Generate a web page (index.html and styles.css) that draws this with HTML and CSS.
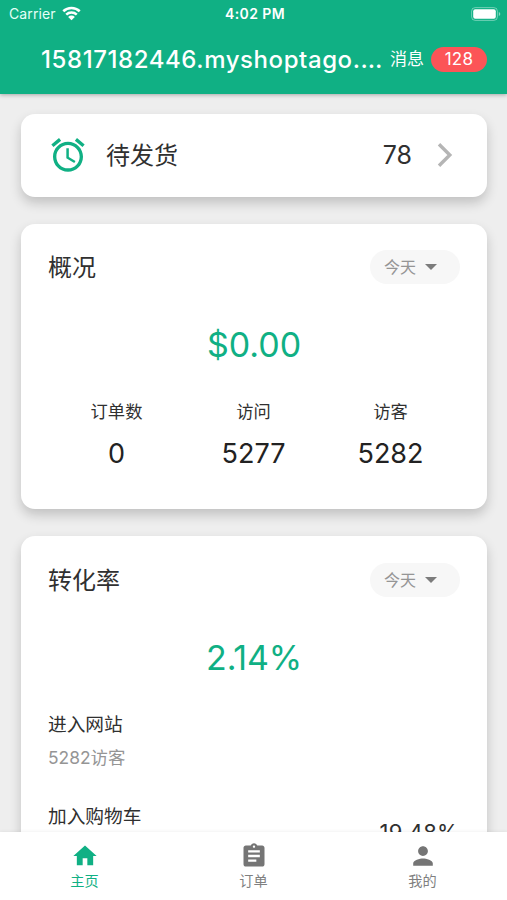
FILE: index.html
```
<!DOCTYPE html>
<html lang="zh-CN">
<head>
<meta charset="UTF-8">
<meta name="viewport" content="width=device-width, initial-scale=1.0">
<title>主页</title>
<link rel="stylesheet" href="styles.css">
</head>
<body>
<div class="app">
    <header class="header">
        <div class="status-bar">
            <div class="carrier">
                <span>Carrier</span>
                <svg class="wifi" viewBox="0 0 18 14" width="19" height="15">
                    <path d="M1.2 4.9a11.2 11.2 0 0 1 15.6 0M4 8a7.2 7.2 0 0 1 10 0" fill="none" stroke="#fff" stroke-width="2.4"/>
                    <path d="M9 13.4L5.8 10.2a4.6 4.6 0 0 1 6.4 0z" fill="#fff"/>
                </svg>
            </div>
            <div class="time">4:02 PM</div>
            <div class="power">
                <svg viewBox="0 0 30 14" width="30" height="14">
                    <rect x=".6" y=".6" width="25.8" height="12.8" rx="3.6" fill="none" stroke="#fff" stroke-opacity=".4"/>
                    <rect x="2.2" y="2.2" width="22.6" height="9.6" rx="2" fill="#fff"/>
                    <path d="M27.8 5v4q1.5-.6 1.5-2t-1.5-2z" fill="#fff" fill-opacity=".5"/>
                </svg>
            </div>
        </div>
        <div class="title-bar">
            <h1>15817182446.myshoptago.…</h1>
            <span class="message">消息</span>
            <span class="badge">128</span>
        </div>
    </header>

    <main class="content">
        <section class="card pending">
            <svg class="alarm" viewBox="0 0 24 24" width="40" height="40">
                <path fill="#10b084" d="M22 5.72l-4.6-3.86-1.29 1.53 4.6 3.86L22 5.72zM7.88 3.39L6.6 1.86 2 5.71l1.29 1.53 4.59-3.85zM12.5 8H11v6l4.75 2.85.75-1.23-4-2.37V8zM12 4c-4.97 0-9 4.03-9 9s4.02 9 9 9c4.97 0 9-4.03 9-9s-4.03-9-9-9zm0 16c-3.87 0-7-3.13-7-7s3.13-7 7-7 7 3.13 7 7-3.13 7-7 7z"/>
            </svg>
            <h2>待发货</h2>
            <span class="count">78</span>
            <svg class="arrow" viewBox="0 0 16 26" width="16" height="26">
                <path d="M2 2.2L12.8 13 2 23.8" fill="none" stroke="#b5b5b5" stroke-width="3.4"/>
            </svg>
        </section>

        <section class="card overview">
            <div class="card-head">
                <h2>概况</h2>
                <div class="select"><span>今天</span><span class="caret"></span></div>
            </div>
            <div class="total">$0.00</div>
            <div class="stats">
                <div class="stat"><span class="label">订单数</span><span class="value">0</span></div>
                <div class="stat"><span class="label">访问</span><span class="value">5277</span></div>
                <div class="stat"><span class="label">访客</span><span class="value">5282</span></div>
            </div>
        </section>

        <section class="card conversion">
            <div class="card-head">
                <h2>转化率</h2>
                <div class="select"><span>今天</span><span class="caret"></span></div>
            </div>
            <div class="total percent">2.14%</div>
            <div class="step">
                <div>
                    <h3>进入网站</h3>
                    <p>5282访客</p>
                </div>
            </div>
            <div class="step">
                <h3>加入购物车</h3>
                <span class="rate">19.48%</span>
            </div>
        </section>
    </main>

    <nav class="tabs">
        <a class="tab active">
            <svg viewBox="0 0 24 24" width="28" height="28"><path d="M10 20v-6h4v6h5v-8h3L12 3 2 12h3v8z"/></svg>
            <span>主页</span>
        </a>
        <a class="tab">
            <svg viewBox="0 0 24 24" width="28" height="28"><path d="M19 3h-4.18C14.4 1.84 13.3 1 12 1c-1.3 0-2.4.84-2.82 2H5c-1.1 0-2 .9-2 2v14c0 1.100.9 2 2 2h14c1.1 0 2-.9 2-2V5c0-1.100-.9-2-2-2zm-7 0c.55 0 1 .45 1 1s-.45 1-1 1-1-.45-1-1 .45-1 1-1zm2 14H7v-2h7v2zm3-4H7v-2h10v2zm0-4H7V7h10v2z"/></svg>
            <span>订单</span>
        </a>
        <a class="tab">
            <svg viewBox="0 0 24 24" width="28" height="28"><path d="M12 12c2.21 0 4-1.79 4-4s-1.79-4-4-4-4 1.790-4 4 1.790 4 4 4zm0 2c-2.670 0-8 1.340-8 4v2h16v-2c0-2.660-5.330-4-8-4z" transform="translate(-.6 -.6) scale(1.05)"/></svg>
            <span>我的</span>
        </a>
    </nav>
</div>
</body>
</html>
```
FILE: styles.css
```
* {
    box-sizing: border-box;
    margin: 0;
    padding: 0;
}

body {
    font-family: 'Inter', 'Noto Sans CJK SC', sans-serif;
    color: #303030;
    background: #eee;
    overflow: hidden;
}

h1, h2, h3 {
    font-weight: 400;
}

svg {
    display: block;
    flex-shrink: 0;
}

.app {
    display: flex;
    flex-direction: column;
    height: 100vh;
}

.header {
    height: 94px;
    flex-shrink: 0;
    background: #10b084;
    color: #fff;
    box-shadow: 0 1px 4px rgba(0, 0, 0, 0.3);
    z-index: 1;
}

.status-bar {
    display: grid;
    grid-template-columns: 1fr auto 1fr;
    align-items: center;
    height: 27px;
    padding: 0 6px 0 9px;
    font-size: 14px;
}

.carrier {
    display: flex;
    align-items: center;
    gap: 6px;
    letter-spacing: 0.1px;
    color: #e5fff7;
}

.time {
    font-weight: 600;
    letter-spacing: 0.4px;
}

.power {
    justify-self: end;
}

.title-bar {
    display: flex;
    align-items: center;
    height: 64px;
    padding: 0 20px 0 41px;
}

.title-bar h1 {
    width: 349px;
    font-size: 24px;
    font-weight: 500;
    letter-spacing: 0.58px;
    white-space: nowrap;
}

.message {
    width: 41px;
    font-size: 17px;
    line-height: 26px;
}

.badge {
    width: 56px;
    height: 25px;
    border-radius: 13px;
    background: #fc5457;
    font-size: 17px;
    line-height: 25px;
    text-align: center;
    letter-spacing: 0.3px;
}

.content {
    flex: 1;
    min-height: 0;
    overflow: hidden;
    padding: 20px 20px 0 21px;
}

.card {
    margin-bottom: 27px;
    padding: 26px 27px 0;
    border-radius: 14px;
    background: #fff;
    box-shadow: 0 6px 12px rgba(0, 0, 0, 0.19);
}

.card h2 {
    padding-top: 2px;
    font-size: 24px;
    line-height: 36px;
}

.pending {
    display: flex;
    align-items: center;
    height: 82.5px;
    padding: 0 34px 0 27px;
}

.pending h2 {
    margin-left: 18px;
}

.count {
    margin-left: auto;
    margin-right: 25px;
    font-size: 25px;
}

.overview {
    height: 285.5px;
}

.conversion {
    height: 500px;
}

.card-head {
    display: flex;
    justify-content: space-between;
    align-items: center;
    height: 35px;
}

.select {
    display: flex;
    align-items: center;
    gap: 9px;
    width: 90px;
    height: 34px;
    padding-left: 14px;
    border-radius: 17px;
    background: #f7f7f7;
    color: #959595;
    font-size: 16px;
}

.select span:first-child {
    padding-bottom: 2px;
}

.caret {
    border: 6px solid transparent;
    border-top-color: #7c7c7c;
    border-bottom: 0;
}

.total {
    margin-top: 38px;
    font-size: 34px;
    line-height: 44px;
    text-align: center;
    color: #10b084;
}

.percent {
    margin-top: 39px;
    letter-spacing: -0.2px;
}

.stats {
    display: grid;
    grid-template-columns: repeat(3, 1fr);
    margin: 32px 1px 0 0;
}

.stat {
    display: flex;
    flex-direction: column;
    align-items: center;
}

.label {
    font-size: 17.3px;
    line-height: 26px;
}

.value {
    margin-top: 12px;
    font-size: 27px;
    line-height: 34px;
    color: #222;
}

.step {
    display: flex;
    justify-content: space-between;
    align-items: flex-start;
    height: 65px;
    margin-top: 27px;
}

.percent + .step {
    margin-top: 28px;
}

.step h3 {
    font-size: 18.7px;
    line-height: 33px;
}

.step p {
    font-size: 17.4px;
    line-height: 33px;
    color: #959595;
}

.rate {
    margin-right: 1px;
    padding-top: 17px;
    font-size: 22px;
    line-height: 30px;
    letter-spacing: 0.3px;
}

.tabs {
    display: flex;
    height: 68px;
    flex-shrink: 0;
    background: #fff;
    box-shadow: 0 -1px 3px rgba(0, 0, 0, 0.05);
    z-index: 1;
}

.tab {
    flex: 1;
    display: flex;
    flex-direction: column;
    align-items: center;
    padding-top: 10px;
    font-size: 14.2px;
    line-height: 22px;
    color: #808080;
    fill: #757575;
}

.tab.active {
    color: #10b084;
    fill: #10b084;
}
```
